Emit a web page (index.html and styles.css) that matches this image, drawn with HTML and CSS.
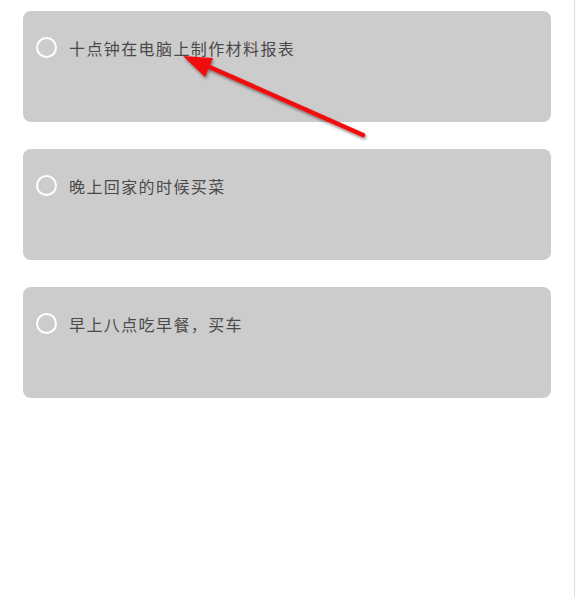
FILE: index.html
```html
<!DOCTYPE html>
<html lang="zh">
<head>
<meta charset="utf-8">
<link rel="stylesheet" href="styles.css">
</head>
<body>
<div class="page">
  <ul class="list">
    <li class="card"><span class="check"></span><span class="label">十点钟在电脑上制作材料报表</span></li>
    <li class="card"><span class="check"></span><span class="label">晚上回家的时候买菜</span></li>
    <li class="card"><span class="check"></span><span class="label">早上八点吃早餐，买车</span></li>
  </ul>
  <div class="edge"></div>
  <svg class="arrow" width="578" height="597" viewBox="0 0 578 597">
    <defs>
      <filter id="sh" x="-20%" y="-20%" width="140%" height="140%">
        <feDropShadow dx="1" dy="2" stdDeviation="1.5" flood-color="#000" flood-opacity="0.45"/>
      </filter>
    </defs>
    <g filter="url(#sh)">
      <line x1="363" y1="135" x2="205" y2="65" stroke="#f01010" stroke-width="4.5" stroke-linecap="round"/>
      <polygon points="183,56 213,58 205,77" fill="#f01010"/>
    </g>
  </svg>
</div>
</body>
</html>
```
FILE: styles.css
```css
html, body {
  margin: 0;
  padding: 0;
  background: #ffffff;
}
.page {
  position: relative;
  width: 578px;
  height: 597px;
  overflow: hidden;
}
.list {
  list-style: none;
  margin: 0;
  padding: 11px 0 0 23px;
  display: flex;
  flex-direction: column;
  gap: 27px;
}
.card {
  width: 528px;
  height: 111px;
  box-sizing: border-box;
  background: #cccccc;
  border-radius: 8px;
  padding: 26px 0 0 13px;
  display: flex;
  align-items: flex-start;
  gap: 12px;
}
.check {
  width: 21px;
  height: 21px;
  box-sizing: border-box;
  border: 2px solid #ffffff;
  border-radius: 50%;
  flex: none;
}
.label {
  font-family: "Noto Sans CJK SC", "Noto Sans", sans-serif;
  font-size: 16px;
  letter-spacing: 1.4px;
  line-height: 22px;
  color: #4a4a4a;
}
.edge {
  position: absolute;
  top: 0;
  right: 3px;
  width: 1px;
  height: 597px;
  background: #dddddd;
}
.arrow {
  position: absolute;
  left: 0;
  top: 0;
  pointer-events: none;
}
```
